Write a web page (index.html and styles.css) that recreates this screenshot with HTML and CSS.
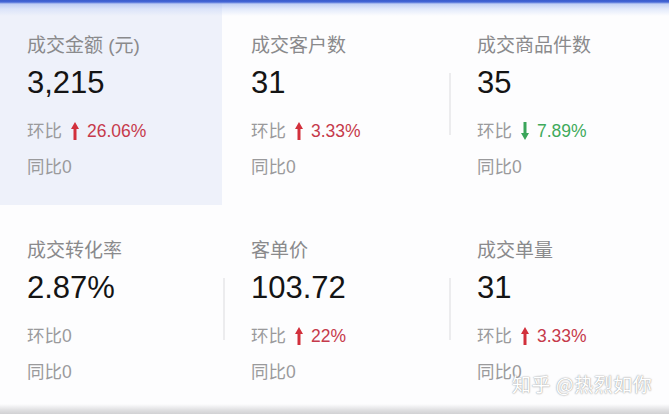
FILE: index.html
```html
<!DOCTYPE html>
<html lang="zh">
<head>
<meta charset="utf-8">
<link rel="stylesheet" href="styles.css">
</head>
<body>
<div class="page">
  <div class="topbar"></div>
  <div class="grid">
    <div class="cell active">
      <div class="title">成交金额 (元)</div>
      <div class="value">3,215</div>
      <div class="stat"><span>环比</span><svg class="arrow up" viewBox="0 0 8 18" width="8" height="18"><path d="M4 0 L8 7 L5.5 7 L5.5 18 L2.5 18 L2.5 7 L0 7 Z"/></svg><span class="red">26.06%</span></div>
      <div class="stat">同比0</div>
    </div>
    <div class="cell">
      <div class="title">成交客户数</div>
      <div class="value">31</div>
      <div class="stat"><span>环比</span><svg class="arrow up" viewBox="0 0 8 18" width="8" height="18"><path d="M4 0 L8 7 L5.5 7 L5.5 18 L2.5 18 L2.5 7 L0 7 Z"/></svg><span class="red">3.33%</span></div>
      <div class="stat">同比0</div>
    </div>
    <div class="cell divided">
      <div class="title">成交商品件数</div>
      <div class="value">35</div>
      <div class="stat"><span>环比</span><svg class="arrow down" viewBox="0 0 8 18" width="8" height="18"><path d="M4 18 L8 11 L5.5 11 L5.5 0 L2.5 0 L2.5 11 L0 11 Z"/></svg><span class="green">7.89%</span></div>
      <div class="stat">同比0</div>
    </div>
    <div class="cell">
      <div class="title">成交转化率</div>
      <div class="value">2.87%</div>
      <div class="stat">环比0</div>
      <div class="stat">同比0</div>
    </div>
    <div class="cell divided">
      <div class="title">客单价</div>
      <div class="value">103.72</div>
      <div class="stat"><span>环比</span><svg class="arrow up" viewBox="0 0 8 18" width="8" height="18"><path d="M4 0 L8 7 L5.5 7 L5.5 18 L2.5 18 L2.5 7 L0 7 Z"/></svg><span class="red">22%</span></div>
      <div class="stat">同比0</div>
    </div>
    <div class="cell divided">
      <div class="title">成交单量</div>
      <div class="value">31</div>
      <div class="stat"><span>环比</span><svg class="arrow up" viewBox="0 0 8 18" width="8" height="18"><path d="M4 0 L8 7 L5.5 7 L5.5 18 L2.5 18 L2.5 7 L0 7 Z"/></svg><span class="red">3.33%</span></div>
      <div class="stat">同比0</div>
    </div>
  </div>
  <div class="bottomshade"></div>
  <div class="watermark">知乎 @热烈如你</div>
</div>
</body>
</html>
```
FILE: styles.css
```css
* { box-sizing: border-box; }
html, body {
  margin: 0;
  padding: 0;
  background: #fdfdfe;
}
body {
  font-family: "Liberation Sans", "Noto Sans CJK SC", sans-serif;
  width: 669px;
  height: 414px;
  overflow: hidden;
}
.page {
  position: relative;
  width: 669px;
  height: 414px;
  overflow: hidden;
}
.topbar {
  position: absolute;
  left: 0;
  top: 0;
  width: 100%;
  height: 16px;
  background: linear-gradient(to bottom, #3a5ccc 0px, #4466d6 2px, rgba(170,190,240,0.7) 4px, rgba(200,215,248,0.5) 9px, rgba(235,240,252,0) 16px);
  z-index: 2;
}
.grid {
  display: grid;
  grid-template-columns: 224px 226px 219px;
  grid-template-rows: 205px 209px;
}
.cell {
  position: relative;
  padding: 34px 0 0 27px;
}
.cell.active {
  background: #eef1fa;
  width: 222px;
}
.divided::before {
  content: "";
  position: absolute;
  left: -1px;
  top: 73px;
  width: 2px;
  height: 62px;
  background: #ececee;
}
.title {
  font-size: 19px;
  line-height: 24px;
  color: #8a8a8c;
}
.value {
  margin-top: 7px;
  font-size: 31px;
  line-height: 36px;
  color: #141414;
}
.stat {
  margin-top: 12px;
  font-size: 17.5px;
  line-height: 24px;
  color: #9a9a9c;
  display: flex;
  align-items: center;
}
.value + .stat { margin-top: 18px; }
.arrow { display: block; margin: 0 8px 0 9px; }
.arrow.up { fill: #d2303c; }
.arrow.down { fill: #3aa55a; }
.red { color: #c63a4b; }
.green { color: #3faa5b; }
.bottomshade {
  position: absolute;
  left: 0;
  bottom: 0;
  width: 100%;
  height: 10px;
  background: linear-gradient(to bottom, rgba(200,200,204,0), rgba(195,195,198,0.5) 60%, rgba(185,185,188,0.65));
}
.watermark {
  position: absolute;
  left: 512px;
  top: 372px;
  font-family: "Noto Sans CJK SC", sans-serif;
  font-size: 19px;
  line-height: 24px;
  color: #ffffff;
  text-shadow: 0 0 1px #9a9a9a, 0 0 2px #b0b0b0;
  letter-spacing: 0.5px;
}
```
